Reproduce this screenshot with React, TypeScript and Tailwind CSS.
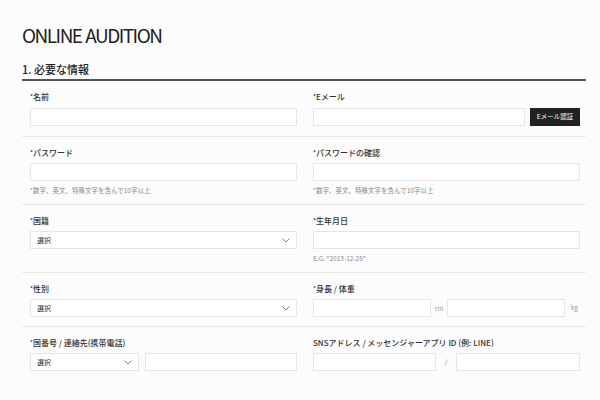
import React from "react";

const font = { fontFamily: '"Noto Sans CJK JP", "Noto Sans", sans-serif' };

function Chevron() {
  return (
    <svg width="8" height="5" viewBox="0 0 8 5" className="text-gray-500">
      <path d="M0.5 0.5 L4 4 L7.5 0.5" fill="none" stroke="currentColor" strokeWidth="0.9" />
    </svg>
  );
}

function Label({ children, req = true }: { children: React.ReactNode; req?: boolean }) {
  return (
    <div className="h-[10px] leading-[10px] text-[8px] font-medium text-[#333]">
      {req && <span className="text-[6px] align-top">*</span>}
      {children}
    </div>
  );
}

function Input({ className = "" }: { className?: string }) {
  return <div className={"h-[18px] border border-[#e6e6e6] bg-white " + className} />;
}

function Select({ className = "" }: { className?: string }) {
  return (
    <div className={"h-[18px] border border-[#e6e6e6] bg-white flex items-center justify-between pl-[6px] pr-[6px] text-[7px] text-[#333] " + className}>
      <span>選択</span>
      <Chevron />
    </div>
  );
}

function Hint({ children }: { children: React.ReactNode }) {
  return <div className="mt-[4px] h-[10px] leading-[10px] text-[6.5px] text-[#888]">{children}</div>;
}

function Row({ children, pb = "pb-[10px]" }: { children: React.ReactNode; pb?: string }) {
  return (
    <div className={"border-b border-[#e8e8e8] pl-[8px] pr-[6px] pt-[11px] grid grid-cols-2 gap-x-[16px] " + pb}>
      {children}
    </div>
  );
}

function Field({ children }: { children: React.ReactNode }) {
  return <div className="flex flex-col">{children}</div>;
}

export default function App() {
  return (
    <div className="w-[600px] h-[400px] bg-[#fcfcfc] overflow-hidden" style={font}>
      <div className="pl-[22px] pr-[14px] pt-[22px]">
        <h1 className="text-[19px] leading-[26px] text-[#222] tracking-[-0.08em] [word-spacing:1px] font-normal">ONLINE AUDITION</h1>
        <div className="mt-[13px] border-b-2 border-[#555] pb-[2px]">
          <h2 className="text-[11px] leading-[16px] font-medium text-[#222]">1. 必要な情報</h2>
        </div>

        <Row>
          <Field>
            <Label>名前</Label>
            <div className="mt-[6px]"><Input /></div>
          </Field>
          <Field>
            <Label>Eメール</Label>
            <div className="mt-[6px] flex gap-[5px]">
              <Input className="flex-1" />
              <div className="w-[50px] h-[18px] bg-[#222] text-white text-[6.5px] flex items-center justify-center">Eメール認証</div>
            </div>
          </Field>
        </Row>

        <Row pb="pb-[9px]">
          <Field>
            <Label>パスワード</Label>
            <div className="mt-[5px]"><Input /></div>
            <Hint>*数字、英文、特殊文字を含んで10字以上</Hint>
          </Field>
          <Field>
            <Label>パスワードの確認</Label>
            <div className="mt-[5px]"><Input /></div>
            <Hint>*数字、英文、特殊文字を含んで10字以上</Hint>
          </Field>
        </Row>

        <Row pb="pb-[9px]">
          <Field>
            <Label>国籍</Label>
            <div className="mt-[5px]"><Select /></div>
          </Field>
          <Field>
            <Label>生年月日</Label>
            <div className="mt-[5px]"><Input /></div>
            <Hint>E.G. "2013-12-25"</Hint>
          </Field>
        </Row>

        <Row pb="pb-[9px]">
          <Field>
            <Label>性別</Label>
            <div className="mt-[5px]"><Select /></div>
          </Field>
          <Field>
            <Label>身長 / 体重</Label>
            <div className="mt-[5px] flex items-center">
              <Input className="w-[118px]" />
              <span className="w-[16px] text-center text-[6px] text-[#999]">cm</span>
              <Input className="w-[118px]" />
              <span className="flex-1 text-right pr-[2px] text-[6.5px] text-[#999]">kg</span>
            </div>
          </Field>
        </Row>

        <div className="pl-[8px] pr-[6px] pt-[11px] grid grid-cols-2 gap-x-[16px]">
          <Field>
            <Label>国番号 / 連絡先(携帯電話)</Label>
            <div className="mt-[5px] flex gap-[6px]">
              <Select className="w-[109px]" />
              <Input className="flex-1" />
            </div>
          </Field>
          <Field>
            <Label req={false}>SNSアドレス / メッセンジャーアプリ ID (例: LINE)</Label>
            <div className="mt-[5px] flex items-center">
              <Input className="w-[123px]" />
              <span className="w-[20px] text-center text-[7px] text-[#999]">/</span>
              <Input className="flex-1" />
            </div>
          </Field>
        </div>
      </div>
    </div>
  );
}
